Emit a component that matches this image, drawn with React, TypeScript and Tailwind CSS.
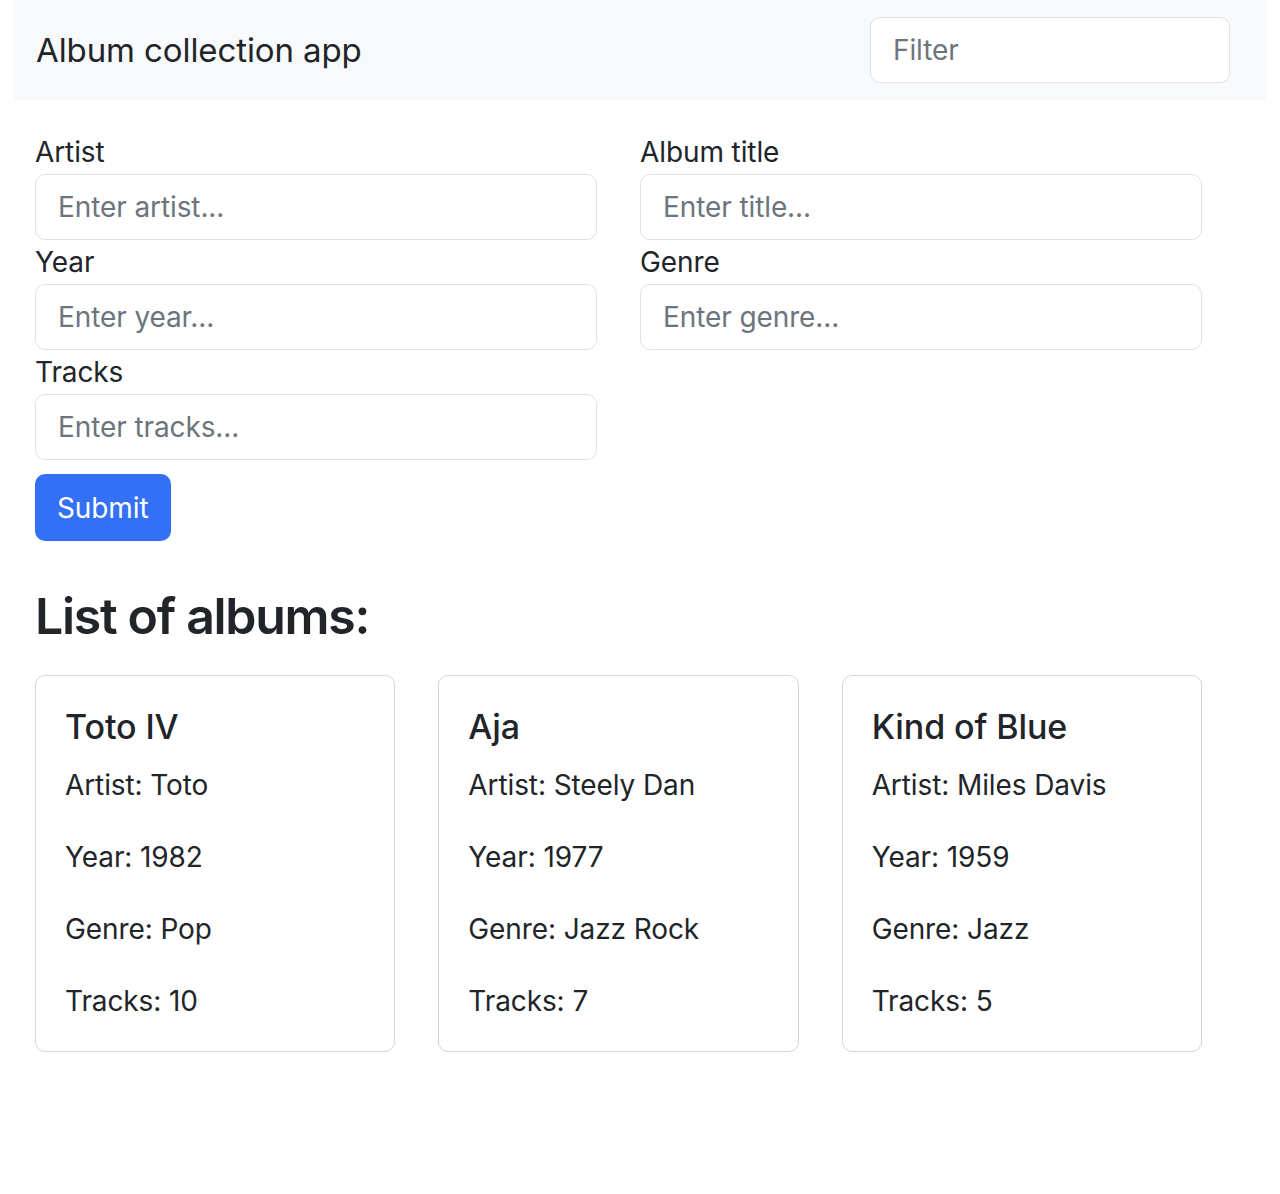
import { useState } from 'react'

type Album = {
  title: string
  artist: string
  year: number
  genre: string
  tracks: number
}

const albums: Album[] = [
  { title: 'Toto IV', artist: 'Toto', year: 1982, genre: 'Pop', tracks: 10 },
  { title: 'Aja', artist: 'Steely Dan', year: 1977, genre: 'Jazz Rock', tracks: 7 },
  { title: 'Kind of Blue', artist: 'Miles Davis', year: 1959, genre: 'Jazz', tracks: 5 },
]

const inputCls =
  'block w-full h-[66px] px-[22px] rounded-[10px] border border-[#dee2e6] bg-white text-[28px] text-[#212529] placeholder:text-[#6c757d] outline-none'

function Field({ label, placeholder }: { label: string; placeholder: string }) {
  return (
    <div>
      <label className="block h-[42px] leading-[42px] mb-[1px]">{label}</label>
      <input className={inputCls} placeholder={placeholder} />
    </div>
  )
}

export default function App() {
  const [filter, setFilter] = useState('')

  const shown = albums.filter((a) =>
    a.title.toLowerCase().includes(filter.toLowerCase())
  )

  return (
    <div className="min-h-[1194px] bg-white text-[#212529] text-[28px] leading-[42px] tracking-[-0.1px] font-['Inter','Liberation_Sans',sans-serif]">
      {/* Navbar */}
      <nav className="mx-[14px] h-[100px] bg-[#f8f9fa] flex items-center justify-between pl-[22px] pr-[36px]">
        <span className="text-[33px] leading-[42px]">Album collection app</span>
        <input
          className={inputCls + ' !w-[360px]'}
          placeholder="Filter"
          value={filter}
          onChange={(e) => setFilter(e.target.value)}
        />
      </nav>

      <div className="pl-[35px] pt-[31px]">
        {/* Form */}
        <div className="w-[1167px] grid grid-cols-2 gap-x-[43px] gap-y-[1px]">
          <Field label="Artist" placeholder="Enter artist..." />
          <Field label="Album title" placeholder="Enter title..." />
          <Field label="Year" placeholder="Enter year..." />
          <Field label="Genre" placeholder="Enter genre..." />
          <Field label="Tracks" placeholder="Enter tracks..." />
        </div>

        <button className="mt-[14px] h-[67px] px-[22px] rounded-[10px] bg-[#3370f6] text-white text-[28px]">
          Submit
        </button>

        <h2 className="mt-[42px] text-[50px] leading-[67px] font-semibold tracking-[-1.3px]">
          List of albums:
        </h2>

        {/* Albums */}
        <div className="mt-[25px] w-[1167px] grid grid-cols-3 gap-[43px]">
          {shown.map((a) => (
            <div
              key={a.title}
              className="border border-[#d6d7d8] rounded-[10px] px-[29px] pt-[30px] pb-[29px]"
            >
              <h5 className="text-[34px] leading-[42px] font-medium mb-[16px]">{a.title}</h5>
              <div className="flex flex-col gap-[30px]">
                <p>Artist: {a.artist}</p>
                <p>Year: {a.year}</p>
                <p>Genre: {a.genre}</p>
                <p>Tracks: {a.tracks}</p>
              </div>
            </div>
          ))}
        </div>
      </div>
    </div>
  )
}
